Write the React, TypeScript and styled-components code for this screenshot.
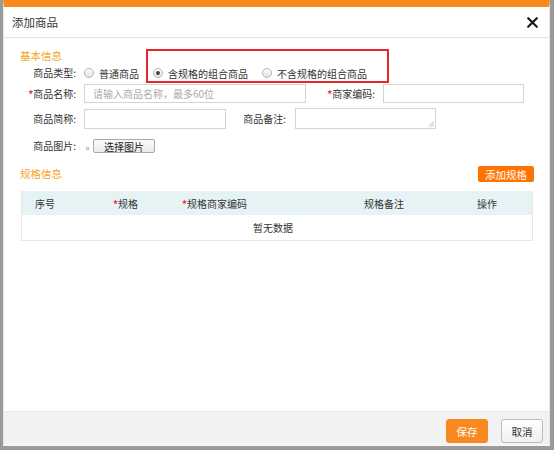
import React from "react";
import styled, { createGlobalStyle } from "styled-components";

const Global = createGlobalStyle`
  html, body { margin: 0; padding: 0; }
  body {
    background: #9a9a9a;
    font-family: "Microsoft YaHei", "Noto Sans CJK SC", "Noto Sans", sans-serif;
    font-size: 10px;
    color: #333;
  }
  * { box-sizing: border-box; }
`;

const Page = styled.div`
  width: 554px;
  height: 450px;
  padding-left: 3px;
`;

const Dialog = styled.div`
  width: 547px;
  height: 446px;
  background: #fff;
  border-top: 7px solid #f7891e;
  border-left: 1px solid #e6e6e6;
  border-right: 1px solid #e6e6e6;
  border-bottom: 2px solid #f6f6f6;
  display: flex;
  flex-direction: column;
`;

const Header = styled.div`
  height: 31px;
  flex: none;
  border-bottom: 1px solid #e3e3e3;
  display: flex;
  align-items: center;
  justify-content: space-between;
  padding: 0 11px 0 8px;
`;

const Title = styled.div`
  font-size: 11.5px;
  color: #333;
  line-height: 14px;
`;

const Close = styled.svg`
  width: 11px;
  height: 11px;
  display: block;
`;

const Body = styled.div`
  flex: 1;
  position: relative;
  padding: 11px 15px 0 16px;
`;

const SectionTitle = styled.div`
  color: #f5a623;
  font-size: 10.5px;
  line-height: 14px;
  height: 14px;
`;

const Row = styled.div<{ $h: number; $mt: number }>`
  display: flex;
  align-items: center;
  height: ${(p) => p.$h}px;
  margin-top: ${(p) => p.$mt}px;
`;

const Label = styled.div<{ $w?: number; $gap?: number }>`
  width: ${(p) => p.$w ?? 56}px;
  text-align: right;
  white-space: nowrap;
  flex: none;
  margin-right: ${(p) => p.$gap ?? 8}px;
  line-height: 14px;
`;

const Star = styled.span`
  color: #e4393c;
  font-weight: bold;
`;

const RadioItem = styled.label`
  display: flex;
  align-items: center;
  margin-right: 14px;
  white-space: nowrap;
`;

const RadioDot = styled.span<{ $checked?: boolean }>`
  width: 10px;
  height: 10px;
  border-radius: 50%;
  border: 1px solid #b5b5b5;
  background: linear-gradient(#fdfdfd, #e4e4e4);
  margin-right: 5px;
  display: flex;
  align-items: center;
  justify-content: center;
  &::after {
    content: "";
    width: 4px;
    height: 4px;
    border-radius: 50%;
    background: ${(p) => (p.$checked ? "#444" : "transparent")};
  }
`;

const Input = styled.div<{ $w: number; $h: number }>`
  width: ${(p) => p.$w}px;
  height: ${(p) => p.$h}px;
  border: 1px solid #d4d4d4;
  background: #fff;
  color: #aaa;
  display: flex;
  align-items: center;
  padding-left: 8px;
  position: relative;
  flex: none;
`;

const Grip = styled.svg`
  position: absolute;
  right: 1px;
  bottom: 1px;
  width: 6px;
  height: 6px;
`;

const Spacer = styled.div<{ $w: number }>`
  width: ${(p) => p.$w}px;
  flex: none;
`;

const BrokenImg = styled.span`
  width: 3px;
  height: 3px;
  border: 1px solid #bbb;
  margin: 4px 4px 0 2px;
  flex: none;
`;

const FileButton = styled.div`
  width: 62px;
  height: 14px;
  border: 1px solid #aaa;
  border-radius: 2px;
  background: linear-gradient(#fafafa, #ececec);
  font-size: 10px;
  color: #222;
  display: flex;
  align-items: center;
  justify-content: center;
`;

const SpecHead = styled.div`
  display: flex;
  align-items: center;
  justify-content: space-between;
  height: 16px;
  margin-top: 11px;
`;

const OrangeButton = styled.div`
  width: 56px;
  height: 16px;
  background: #ff7300;
  color: #fff;
  border-radius: 2px;
  font-size: 10.5px;
  display: flex;
  align-items: center;
  justify-content: center;
`;

const Table = styled.div`
  margin: 9px 0 0 1px;
  width: 512px;
  border: 1px solid #e6e6e6;
  border-top: none;
`;

const THead = styled.div`
  display: grid;
  grid-template-columns: 78px 69px 182px 113px 1fr;
  height: 24px;
  background: #e6f3f5;
  align-items: center;
`;

const Th = styled.div`
  padding-left: 13px;
  white-space: nowrap;
`;

const Empty = styled.div`
  height: 25px;
  display: flex;
  align-items: center;
  justify-content: center;
  padding-right: 8px;
`;

const Highlight = styled.div`
  position: absolute;
  left: 142px;
  top: 11px;
  width: 243px;
  height: 34px;
  border: 2px solid #e8262a;
  pointer-events: none;
`;

const Footer = styled.div`
  height: 33px;
  flex: none;
  background: #f2f2f2;
  border-top: 1px solid #e6e6e6;
  display: flex;
  justify-content: flex-end;
  align-items: flex-start;
  padding: 7px 6px 0 0;
  gap: 13px;
`;

const FootButton = styled.div<{ $primary?: boolean }>`
  width: 42px;
  height: 24px;
  border-radius: 3px;
  font-size: 10.5px;
  display: flex;
  align-items: center;
  justify-content: center;
  background: ${(p) => (p.$primary ? "#f7891e" : "linear-gradient(#ffffff, #f0f0f0)")};
  color: ${(p) => (p.$primary ? "#fff" : "#333")};
  border: 1px solid ${(p) => (p.$primary ? "#f7891e" : "#bcbcbc")};
`;

export default function App() {
  return (
    <>
      <Global />
      <Page>
        <Dialog>
          <Header>
            <Title>添加商品</Title>
            <Close viewBox="0 0 11 11">
              <path d="M1.2 1.2 L9.8 9.8 M9.8 1.2 L1.2 9.8" stroke="#1a1a1a" strokeWidth="2.2" strokeLinecap="round" />
            </Close>
          </Header>
          <Body>
            <SectionTitle>基本信息</SectionTitle>
            <Row $h={20} $mt={0}>
              <Label>商品类型:</Label>
              <RadioItem><RadioDot />普通商品</RadioItem>
              <RadioItem><RadioDot $checked />含规格的组合商品</RadioItem>
              <RadioItem><RadioDot />不含规格的组合商品</RadioItem>
            </Row>
            <Row $h={19} $mt={1}>
              <Label><Star>*</Star>商品名称:</Label>
              <Input $w={222} $h={19}>请输入商品名称，最多60位</Input>
              <Spacer $w={13} />
              <Label $w={56} $gap={8}><Star>*</Star>商家编码:</Label>
              <Input $w={141} $h={19} />
            </Row>
            <Row $h={21} $mt={5}>
              <Label>商品简称:</Label>
              <Input $w={142} $h={20} />
              <Label $w={60} $gap={9}>商品备注:</Label>
              <Input $w={141} $h={21}>
                <Grip viewBox="0 0 6 6">
                  <path d="M1 5.5 L5.5 1 M3.5 5.5 L5.5 3.5" stroke="#999" strokeWidth="0.8" />
                </Grip>
              </Input>
            </Row>
            <Row $h={18} $mt={8}>
              <Label>商品图片:</Label>
              <BrokenImg />
              <FileButton>选择图片</FileButton>
            </Row>
            <SpecHead>
              <SectionTitle as="span">规格信息</SectionTitle>
              <OrangeButton>添加规格</OrangeButton>
            </SpecHead>
            <Table>
              <THead>
                <Th>序号</Th>
                <Th><Star>*</Star>规格</Th>
                <Th><Star>*</Star>规格商家编码</Th>
                <Th>规格备注</Th>
                <Th>操作</Th>
              </THead>
              <Empty>暂无数据</Empty>
            </Table>
            <Highlight />
          </Body>
          <Footer>
            <FootButton $primary>保存</FootButton>
            <FootButton>取消</FootButton>
          </Footer>
        </Dialog>
      </Page>
    </>
  );
}
